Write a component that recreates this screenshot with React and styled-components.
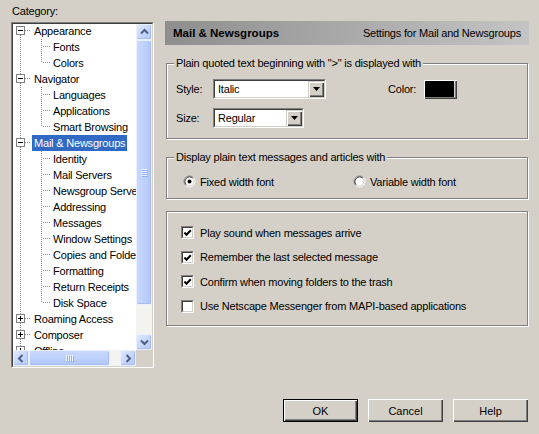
import React from "react";
import styled, { createGlobalStyle } from "styled-components";

const GlobalStyle = createGlobalStyle`
  html, body {
    margin: 0;
    padding: 0;
    background: #D4D0C8;
  }
  body {
    font-family: "Liberation Sans", Arial, sans-serif;
    font-size: 11px;
    letter-spacing: -0.2px;
    color: #000;
  }
  * { box-sizing: border-box; }
`

const Dialog = styled.div`
  width: 539px;
  height: 434px;
  padding: 0 10px 0 11px;
  display: flex;
  flex-direction: column;
  overflow: hidden;
`

const Body = styled.div`
  display: flex;
  gap: 11px;
`

const Sidebar = styled.div`
  width: 143px;
  flex: none;
  display: flex;
  flex-direction: column;
`

const CategoryLabel = styled.div`
  height: 22px;
  line-height: 22px;
  padding-left: 1px;
`

const Sunken = styled.div`
  border: 1px solid;
  border-color: #808080 #fff #fff #808080;
`

const SunkenInner = styled.div`
  border: 1px solid;
  border-color: #404040 #D4D0C8 #D4D0C8 #404040;
  background: #fff;
`

const TreeFrame = styled(Sunken)`
  height: 346px;
`

const TreeInner = styled(SunkenInner)`
  height: 100%;
  display: grid;
  grid-template-columns: 1fr 16px;
  grid-template-rows: 1fr 16px;
`

const TreeView = styled.div`
  overflow: hidden;
  min-width: 0;
`

const TreeList = styled.div`
  margin-top: -1px;
`

const TreeRow = styled.div`
  display: flex;
  height: 16px;
  white-space: nowrap;
`

const Lines = styled.svg`
  flex: none;
  display: block;
`

const TreeLabel = styled.span`
  padding: 0 2px;
  line-height: 16px;
  background: ${p => (p.$selected ? "#316AC5" : "transparent")};
  color: ${p => (p.$selected ? "#fff" : "#000")};
`

const ScrollBar = styled.div`
  display: flex;
  flex-direction: ${p => (p.$vertical ? "column" : "row")};
  background: #F3F3EF;
`

const ScrollButton = styled.div`
  width: 16px;
  height: 16px;
  flex: none;
  display: flex;
  align-items: center;
  justify-content: center;
  border: 1px solid #EAF0FD;
  border-radius: 2px;
  background: linear-gradient(135deg, #DFE8FE 0%, #C6D6FC 55%, #B4C9FA 100%);
  box-shadow: inset -1px -1px 0 #A6BDF3;
`

const Thumb = styled.div`
  flex: none;
  ${p => (p.$vertical ? `height: ${p.$length}px;` : `width: ${p.$length}px;`)}
  display: flex;
  align-items: center;
  justify-content: center;
  border: 1px solid #EAF0FD;
  border-radius: 2px;
  background: linear-gradient(${p => (p.$vertical ? "90deg" : "180deg")}, #C9D8FD 0%, #BCCFFB 60%, #B1C6F9 100%);
  box-shadow: inset -1px -1px 0 #A6BDF3;
`

const Track = styled.div`
  flex: 1;
`

const Corner = styled.div`
  background: #D4D0C8;
`

const Panel = styled.div`
  flex: 1;
  padding-top: 21px;
  display: flex;
  flex-direction: column;
`

const Header = styled.div`
  height: 24px;
  display: flex;
  align-items: center;
  justify-content: space-between;
  padding: 0 8px;
  background: linear-gradient(to right, #8E8E8E 0%, #A4A4A4 40%, #C4C4C4 100%);
`

const HeaderTitle = styled.span`
  font-weight: bold;
  font-size: 11.5px;
  letter-spacing: 0;
`

const GroupBox = styled.div`
  position: relative;
  margin: ${p => p.$gap}px 1px 0 1px;
  padding: ${p => p.$pad};
  border: 1px solid #808080;
  box-shadow: inset 1px 1px 0 #fff, 1px 1px 0 #fff;
`

const Legend = styled.span`
  position: absolute;
  top: -7px;
  left: 7px;
  padding: 0 2px;
  line-height: 13px;
  background: #D4D0C8;
`

const FieldRows = styled.div`
  display: flex;
  flex-direction: column;
  gap: 9px;
`

const FieldRow = styled.div`
  display: flex;
  align-items: center;
  height: 20px;
`

const FieldLabel = styled.span`
  width: ${p => p.$width}px;
  margin-left: ${p => p.$offset || 0}px;
`

const Combo = styled(Sunken)`
  width: ${p => p.$width}px;
  height: 20px;
`

const ComboInner = styled(SunkenInner)`
  height: 100%;
  display: flex;
`

const ComboText = styled.span`
  flex: 1;
  padding-left: 3px;
  line-height: 16px;
`

const RaisedButton = styled.div`
  background: #D4D0C8;
  box-shadow: inset 1px 1px 0 #D4D0C8, inset 2px 2px 0 #fff,
    inset -1px -1px 0 #404040, inset -2px -2px 0 #808080;
`

const ComboButton = styled(RaisedButton)`
  width: 16px;
  height: 16px;
  display: flex;
  align-items: center;
  justify-content: center;
`

const ColorButton = styled(RaisedButton)`
  width: 34px;
  height: 20px;
  padding: 2px 3px 2px 2px;
  margin-left: 7px;
`

const ColorFill = styled.div`
  width: 100%;
  height: 100%;
  background: ${p => p.$color};
`

const RadioRow = styled.div`
  display: grid;
  grid-template-columns: 170px auto;
  height: 13px;
`

const OptionItem = styled.label`
  display: flex;
  align-items: center;
  gap: ${p => p.$gap}px;
  height: 13px;
`

const CheckList = styled.div`
  display: flex;
  flex-direction: column;
  gap: 11.5px;
`

const CheckBox = styled(Sunken)`
  width: 13px;
  height: 13px;
  flex: none;
`

const CheckInner = styled(SunkenInner)`
  width: 100%;
  height: 100%;
`

const ButtonBar = styled.div`
  display: flex;
  justify-content: flex-end;
  gap: 10px;
  margin-top: 31px;
  padding-right: 1px;
`

const PushButton = styled.button`
  width: 75px;
  height: 23px;
  padding: 0;
  font: inherit;
  color: #000;
  background: #D4D0C8;
  border: ${p => (p.$default ? "1px solid #000" : "none")};
  box-shadow: inset 1px 1px 0 #fff, inset -1px -1px 0 #404040,
    inset -2px -2px 0 #808080;
`

const tree = [
  { label: "Appearance", open: true, children: ["Fonts", "Colors"] },
  { label: "Navigator", open: true, children: ["Languages", "Applications", "Smart Browsing"] },
  {
    label: "Mail & Newsgroups",
    open: true,
    selected: true,
    children: [
      "Identity", "Mail Servers", "Newsgroup Servers", "Addressing", "Messages",
      "Window Settings", "Copies and Folders", "Formatting", "Return Receipts", "Disk Space",
    ],
  },
  { label: "Roaming Access", open: false, children: [] },
  { label: "Composer", open: false, children: [] },
  { label: "Offline", open: false, children: [] },
  { label: "Advanced", open: false, children: [] },
]

const DOT = "#8C8C8C"

function Connectors({ kind, first, last, open }) {
  if (kind === "top") {
    return (
      <Lines width="19" height="16">
        <line x1="7.5" y1={first ? 8 : 0} x2="7.5" y2="16" stroke={DOT} strokeDasharray="1 1" />
        <line x1="12" y1="7.5" x2="18" y2="7.5" stroke={DOT} strokeDasharray="1 1" />
        <rect x="3.5" y="3.5" width="8" height="8" fill="#fff" stroke="#808080" />
        <line x1="5" y1="7.5" x2="10" y2="7.5" stroke="#000" />
        {!open && <line x1="7.5" y1="5" x2="7.5" y2="10" stroke="#000" />}
      </Lines>
    )
  }
  return (
    <Lines width="38" height="16">
      <line x1="7.5" y1="0" x2="7.5" y2="16" stroke={DOT} strokeDasharray="1 1" />
      <line x1="28.5" y1="0" x2="28.5" y2={last ? 8 : 16} stroke={DOT} strokeDasharray="1 1" />
      <line x1="30" y1="7.5" x2="37" y2="7.5" stroke={DOT} strokeDasharray="1 1" />
    </Lines>
  )
}

function Chevron({ dir }) {
  const pts = {
    up: "1,5.5 4.5,2 8,5.5",
    down: "1,2.5 4.5,6 8,2.5",
    left: "5.5,1 2,4.5 5.5,8",
    right: "2.5,1 6,4.5 2.5,8",
  }[dir]
  return (
    <svg width="9" height="9">
      <polyline points={pts} fill="none" stroke="#4D6185" strokeWidth="2" />
    </svg>
  )
}

function Gripper({ vertical }) {
  const lines = [0, 2, 4, 6]
  return (
    <svg width="8" height="8">
      {lines.map(o =>
        vertical ? (
          <g key={o}>
            <line x1="1" y1={o + 0.5} x2="7" y2={o + 0.5} stroke="#EEF4FE" />
            <line x1="2" y1={o + 1.5} x2="8" y2={o + 1.5} stroke="#8CB0F8" />
          </g>
        ) : (
          <g key={o}>
            <line x1={o + 0.5} y1="1" x2={o + 0.5} y2="7" stroke="#EEF4FE" />
            <line x1={o + 1.5} y1="2" x2={o + 1.5} y2="8" stroke="#8CB0F8" />
          </g>
        )
      )}
    </svg>
  )
}

function Tree() {
  const rows = []
  tree.forEach((node, i) => {
    rows.push(
      <TreeRow key={node.label}>
        <Connectors kind="top" first={i === 0} open={node.open} />
        <TreeLabel $selected={node.selected}>{node.label}</TreeLabel>
      </TreeRow>
    )
    if (node.open) {
      node.children.forEach((child, j) => {
        rows.push(
          <TreeRow key={node.label + child}>
            <Connectors kind="child" last={j === node.children.length - 1} />
            <TreeLabel>{child}</TreeLabel>
          </TreeRow>
        )
      })
    }
  })

  return (
    <TreeFrame>
      <TreeInner>
        <TreeView>
          <TreeList>{rows}</TreeList>
        </TreeView>
        <ScrollBar $vertical>
          <ScrollButton><Chevron dir="up" /></ScrollButton>
          <Thumb $vertical $length={265}><Gripper vertical /></Thumb>
          <Track />
          <ScrollButton><Chevron dir="down" /></ScrollButton>
        </ScrollBar>
        <ScrollBar>
          <ScrollButton><Chevron dir="left" /></ScrollButton>
          <Thumb $length={81}><Gripper /></Thumb>
          <Track />
          <ScrollButton><Chevron dir="right" /></ScrollButton>
        </ScrollBar>
        <Corner />
      </TreeInner>
    </TreeFrame>
  )
}

function DropDown({ width, value }) {
  return (
    <Combo $width={width}>
      <ComboInner>
        <ComboText>{value}</ComboText>
        <ComboButton>
          <svg width="7" height="4">
            <polygon points="0,0 7,0 3.5,4" fill="#000" />
          </svg>
        </ComboButton>
      </ComboInner>
    </Combo>
  )
}

function Radio({ checked, label }) {
  return (
    <OptionItem $gap={4}>
      <svg width="13" height="13">
        <circle cx="6.5" cy="6.5" r="5" fill="#fff" />
        <path d="M2.61 10.39 A5.5 5.5 0 0 1 10.39 2.61" fill="none" stroke="#808080" />
        <path d="M10.39 2.61 A5.5 5.5 0 0 1 2.61 10.39" fill="none" stroke="#fff" />
        <path d="M3.32 9.68 A4.5 4.5 0 0 1 9.68 3.32" fill="none" stroke="#404040" />
        <path d="M9.68 3.32 A4.5 4.5 0 0 1 3.32 9.68" fill="none" stroke="#D4D0C8" />
        {checked && <circle cx="6.5" cy="6.5" r="2" fill="#000" />}
      </svg>
      <span>{label}</span>
    </OptionItem>
  )
}

function Check({ checked, label }) {
  return (
    <OptionItem $gap={6}>
      <CheckBox>
        <CheckInner>
          {checked && (
            <svg width="9" height="9">
              <path d="M1.5 3.5 L3.5 5.8 L7.8 1.3" fill="none" stroke="#000" strokeWidth="2" />
            </svg>
          )}
        </CheckInner>
      </CheckBox>
      <span>{label}</span>
    </OptionItem>
  )
}

export default function App() {
  return (
    <>
      <GlobalStyle />
      <Dialog>
        <Body>
          <Sidebar>
            <CategoryLabel>Category:</CategoryLabel>
            <Tree />
          </Sidebar>

          <Panel>
            <Header>
              <HeaderTitle>Mail &amp; Newsgroups</HeaderTitle>
              <span>Settings for Mail and Newsgroups</span>
            </Header>

            <GroupBox $gap={18} $pad="15px 0 10px 9px">
              <Legend>Plain quoted text beginning with "&gt;" is displayed with</Legend>
              <FieldRows>
                <FieldRow>
                  <FieldLabel $width={37}>Style:</FieldLabel>
                  <DropDown width={113} value="Italic" />
                  <FieldLabel $offset={62}>Color:</FieldLabel>
                  <ColorButton>
                    <ColorFill $color="#000" />
                  </ColorButton>
                </FieldRow>
                <FieldRow>
                  <FieldLabel $width={37}>Size:</FieldLabel>
                  <DropDown width={91} value="Regular" />
                </FieldRow>
              </FieldRows>
            </GroupBox>

            <GroupBox $gap={18} $pad="17px 0 10px 16px">
              <Legend>Display plain text messages and articles with</Legend>
              <RadioRow>
                <Radio checked label="Fixed width font" />
                <Radio label="Variable width font" />
              </RadioRow>
            </GroupBox>

            <GroupBox $gap={12} $pad="14px 0 12.5px 14px">
              <CheckList>
                <Check checked label="Play sound when messages arrive" />
                <Check checked label="Remember the last selected message" />
                <Check checked label="Confirm when moving folders to the trash" />
                <Check label="Use Netscape Messenger from MAPI-based applications" />
              </CheckList>
            </GroupBox>
          </Panel>
        </Body>

        <ButtonBar>
          <PushButton $default>OK</PushButton>
          <PushButton>Cancel</PushButton>
          <PushButton>Help</PushButton>
        </ButtonBar>
      </Dialog>
    </>
  )
}
